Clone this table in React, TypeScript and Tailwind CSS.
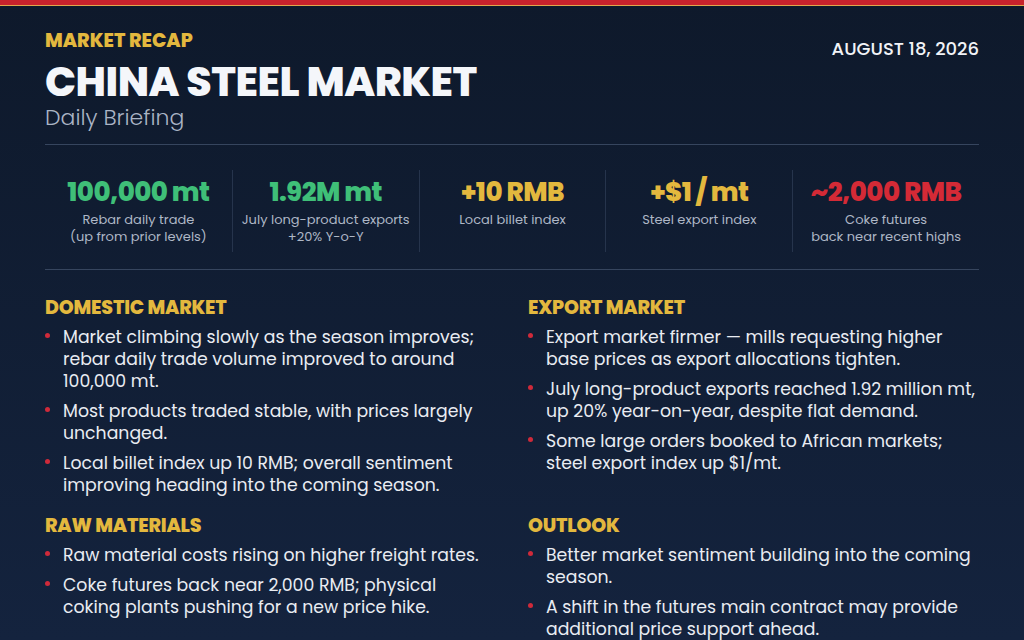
const stats = [
  { value: "100,000 mt", color: "text-[#3fbf78]", lines: ["Rebar daily trade", "(up from prior levels)"] },
  { value: "1.92M mt", color: "text-[#3fbf78]", lines: ["July long-product exports", "+20% Y-o-Y"] },
  { value: "+10 RMB", color: "text-[#e3b83e]", lines: ["Local billet index"] },
  { value: "+$1 / mt", color: "text-[#e3b83e]", lines: ["Steel export index"] },
  { value: "~2,000 RMB", color: "text-[#d42a36]", lines: ["Coke futures", "back near recent highs"] },
];

const sections = [
  {
    title: "DOMESTIC MARKET",
    items: [
      "Market climbing slowly as the season improves; rebar daily trade volume improved to around 100,000 mt.",
      "Most products traded stable, with prices largely unchanged.",
      "Local billet index up 10 RMB; overall sentiment improving heading into the coming season.",
    ],
  },
  {
    title: "EXPORT MARKET",
    items: [
      "Export market firmer — mills requesting higher base prices as export allocations tighten.",
      "July long-product exports reached 1.92 million mt, up 20% year-on-year, despite flat demand.",
      "Some large orders booked to African markets; steel export index up $1/mt.",
    ],
  },
  {
    title: "RAW MATERIALS",
    items: [
      "Raw material costs rising on higher freight rates.",
      "Coke futures back near 2,000 RMB; physical coking plants pushing for a new price hike.",
    ],
  },
  {
    title: "OUTLOOK",
    items: [
      "Better market sentiment building into the coming season.",
      "A shift in the futures main contract may provide additional price support ahead.",
    ],
  },
];

function Section({ title, items }: { title: string; items: string[] }) {
  return (
    <div>
      <h2 className="text-[19px] font-extrabold leading-[24px] tracking-[-0.2px] text-[#e3b83e]">{title}</h2>
      <ul className="mt-[6px] flex flex-col gap-[8px]">
        {items.map((t) => (
          <li key={t} className="flex text-[17.3px] leading-[22px] text-[#e9ecf2]">
            <span className="mr-[13px] mt-[7px] h-[5px] w-[5px] shrink-0 rounded-full bg-[#cf2a3a]" />
            <span>{t}</span>
          </li>
        ))}
      </ul>
    </div>
  );
}

export default function App() {
  return (
    <div className="flex h-[640px] w-[1024px] flex-col overflow-hidden bg-gradient-to-b from-[#0e192b] to-[#14233e] font-['Poppins','Open_Sans',sans-serif]">
      {/* top stripe */}
      <div className="h-[6px] bg-[#c8222c]" />
      <div className="h-[2px] bg-[#e2a64c]" />

      <div className="flex flex-1 flex-col px-[45px]">
        {/* header */}
        <header className="flex items-start justify-between pt-[24px]">
          <div>
            <div className="text-[19px] font-extrabold leading-[22px] text-[#e3b83e]">MARKET RECAP</div>
            <h1 className="mt-[8px] text-[41px] font-extrabold leading-[44px] tracking-[-0.5px] text-[#f4f6fa]">
              CHINA STEEL MARKET
            </h1>
            <div className="text-[22px] font-light leading-[28px] text-[#aab4c5]">Daily Briefing</div>
          </div>
          <div className="pt-[8px] text-[18px] font-medium leading-[22px] text-[#f1f3f7]">AUGUST 18, 2026</div>
        </header>

        <div className="mt-[12px] h-px bg-[#36455e]" />

        {/* stats */}
        <div className="grid grid-cols-5 pt-[25px] pb-[17px]">
          {stats.map((s, i) => (
            <div
              key={s.value}
              className={`flex h-[82px] flex-col items-center pt-[6px] text-center ${i > 0 ? "border-l border-[#26344c]" : ""}`}
            >
              <div className={`text-[26px] font-extrabold leading-[32px] tracking-[-0.5px] ${s.color}`}>{s.value}</div>
              <div className="mt-[3px] text-[13px] leading-[17px] text-[#aeb7c6]">
                {s.lines.map((l) => (
                  <div key={l}>{l}</div>
                ))}
              </div>
            </div>
          ))}
        </div>

        <div className="h-px bg-[#36455e]" />

        {/* sections */}
        <div className="grid grid-cols-2 gap-x-[32px] gap-y-[18px] pt-[26px]">
          {sections.map((s) => (
            <Section key={s.title} title={s.title} items={s.items} />
          ))}
        </div>
      </div>
    </div>
  );
}
